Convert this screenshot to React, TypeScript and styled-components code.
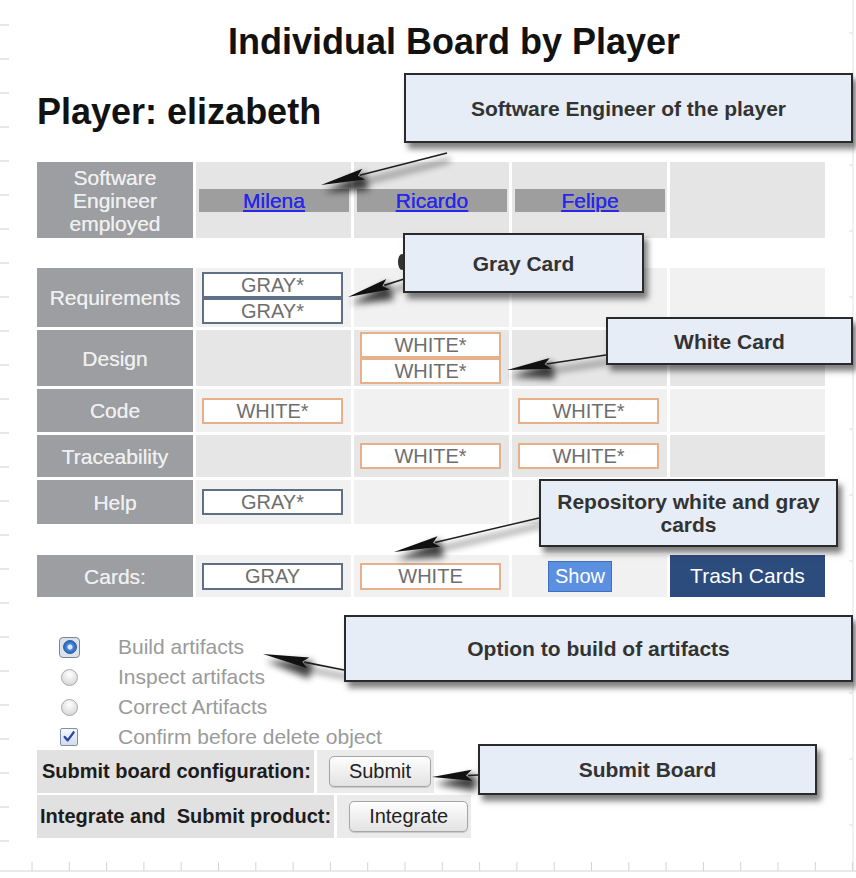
import React from 'react';
import styled, { createGlobalStyle, css } from 'styled-components';

const GlobalStyle = createGlobalStyle`
  html, body { margin: 0; padding: 0; background: #fff; }
  body { font-family: "Liberation Sans", Arial, sans-serif; }
`;

const Page = styled.div`
  position: relative;
  width: 856px;
  height: 878px;
  overflow: hidden;
  background: #fff;
  font-family: "Liberation Sans", Arial, sans-serif;
`;

const Ruler = styled.svg`
  position: absolute;
  left: 0;
  top: 0;
  width: 856px;
  height: 878px;
  z-index: 0;
`;

const Content = styled.div`
  position: relative;
  z-index: 1;
  padding: 22px 0 0 37px;
  display: flex;
  flex-direction: column;
  align-items: flex-start;
`;

const Title = styled.h1`
  align-self: stretch;
  margin: 0;
  padding-left: 15px;
  text-align: center;
  font-size: 36px;
  line-height: 40px;
  font-weight: bold;
  color: #121212;
`;

const PlayerName = styled.h2`
  margin: 30px 0 0;
  font-size: 36px;
  line-height: 40px;
  font-weight: bold;
  color: #121212;
`;

const Board = styled.div<{ $rows: string; $mt: number }>`
  display: grid;
  grid-template-columns: 156px repeat(4, 155px);
  grid-template-rows: ${p => p.$rows};
  gap: 3px;
  margin-top: ${p => p.$mt}px;
`;

const HeadCell = styled.div`
  background: #9c9ea2;
  color: #efefef;
  font-size: 21px;
  line-height: 23px;
  display: flex;
  align-items: center;
  justify-content: center;
  text-align: center;
  text-shadow: 0 0 0.4px #efefef;
`;

const EngineerCell = styled.div`
  background: #e5e5e5;
  display: flex;
  flex-direction: column;
  justify-content: center;
  padding: 0 2px 0 3px;
`;

const LinkBar = styled.div`
  background: #9e9e9e;
  height: 23px;
  line-height: 23px;
  text-align: center;
`;

const EngineerLink = styled.a`
  color: #2626ee;
  text-decoration: underline;
  font-size: 21px;
  text-shadow: 0 0 0.5px #2626ee;
`;

const DataCell = styled.div<{ $tone: 'light' | 'mid'; $padLeft?: number }>`
  background: ${p => (p.$tone === 'light' ? '#f1f1f1' : '#e6e6e6')};
  display: flex;
  flex-direction: column;
  justify-content: center;
  align-items: flex-start;
  padding-left: ${p => p.$padLeft ?? 6}px;
`;

const Card = styled.div<{ $kind: 'gray' | 'white'; $h?: number }>`
  box-sizing: border-box;
  width: 141px;
  height: ${p => p.$h ?? 26}px;
  background: #fff;
  border: 2px solid ${p => (p.$kind === 'gray' ? '#5f6f85' : '#e5b08a')};
  color: #6e6e6e;
  font-size: 20px;
  line-height: ${p => (p.$h ?? 26) - 4}px;
  text-align: center;
`;

const ShowButton = styled.button`
  height: 31px;
  padding: 0 6px;
  background: #5b8fdf;
  border: 1px solid #3f6fbf;
  color: #fff;
  font-family: "Liberation Sans", Arial, sans-serif;
  font-size: 20px;
  line-height: 29px;
  cursor: pointer;
`;

const TrashButton = styled.button`
  width: 100%;
  height: 100%;
  background: #2c4c7e;
  border: none;
  color: #fff;
  font-family: "Liberation Sans", Arial, sans-serif;
  font-size: 21px;
  cursor: pointer;
`;

const Options = styled.div`
  margin-top: 35px;
  display: flex;
  flex-direction: column;
`;

const OptionRow = styled.label`
  display: flex;
  align-items: center;
  height: 30px;
  color: #9a9a9a;
  font-size: 21px;
`;

const Mark = styled.span`
  box-sizing: border-box;
  width: 81px;
  padding-left: 22px;
  display: flex;
  align-items: center;
`;

const RadioBox = styled.span<{ $on?: boolean }>`
  box-sizing: border-box;
  width: 21px;
  height: 21px;
  flex-shrink: 0;
  display: flex;
  align-items: center;
  justify-content: center;
  border-radius: 4px;
  ${p =>
    p.$on &&
    css`
      border: 1px solid #7d8697;
      background: #dde2ea;
    `}
`;

const Radio = styled.input.attrs({ type: 'radio' })`
  appearance: none;
  flex-shrink: 0;
  margin: 0;
  width: 17px;
  height: 17px;
  border-radius: 50%;
  border: 1px solid #a9a9a9;
  background: radial-gradient(circle at 50% 30%, #ffffff, #cfcfcf);
  &:checked {
    width: 14px;
    height: 14px;
    border-color: #2b5c9e;
    background: radial-gradient(circle at 50% 50%, #dbe9ff 0 2px, #4a8be0 3px, #1e5bb0 7px);
  }
`;

const CheckBox = styled.span`
  box-sizing: border-box;
  flex-shrink: 0;
  width: 18px;
  height: 18px;
  margin-left: 1px;
  border: 1px solid #7f8fae;
  border-radius: 2px;
  background: linear-gradient(#f6f8fc, #d3dcea);
  display: flex;
  align-items: center;
  justify-content: center;
`;

const ActionRow = styled.div<{ $mt: number }>`
  display: flex;
  gap: 3px;
  height: 43px;
  margin-top: ${p => p.$mt}px;
`;

const ActionLabel = styled.div<{ $pl: number }>`
  background: #e1e1e1;
  color: #1c1c1c;
  font-size: 20px;
  font-weight: bold;
  padding: 0 3px 0 ${p => p.$pl}px;
  display: flex;
  align-items: center;
  white-space: nowrap;
`;

const ActionCell = styled.div`
  background: #ebebeb;
  padding: 0 3px 0 12px;
  display: flex;
  align-items: center;
`;

const PushButton = styled.button`
  height: 31px;
  padding: 0 19px;
  border: 1px solid #a5a5a5;
  border-radius: 5px;
  background: linear-gradient(#fefefe, #e2e2e2);
  box-shadow: 0 1px 1px rgba(0, 0, 0, 0.15);
  font-family: "Liberation Sans", Arial, sans-serif;
  font-size: 20px;
  color: #222;
  cursor: pointer;
`;

const Overlay = styled.svg`
  position: absolute;
  left: 0;
  top: 0;
  width: 856px;
  height: 878px;
  pointer-events: none;
  z-index: 2;
`;

const Callout = styled.div<{ $x: number; $y: number; $w: number; $h: number }>`
  position: absolute;
  left: ${p => p.$x}px;
  top: ${p => p.$y}px;
  width: ${p => p.$w}px;
  height: ${p => p.$h}px;
  box-sizing: border-box;
  z-index: 3;
  padding: 0 10px;
  border: 2px solid #2a2a2a;
  background: #e7edf6;
  box-shadow: 4px 6px 6px rgba(0, 0, 0, 0.5);
  display: flex;
  align-items: center;
  justify-content: center;
  text-align: center;
  color: #333;
  font-size: 21px;
  line-height: 23px;
  font-weight: bold;
`;

type Kind = 'gray' | 'white';
type Row = { label: string; tone: 'light' | 'mid'; cells: Kind[][] };

const rows: Row[] = [
  { label: 'Requirements', tone: 'light', cells: [['gray', 'gray'], [], [], []] },
  { label: 'Design', tone: 'mid', cells: [[], ['white', 'white'], [], []] },
  { label: 'Code', tone: 'light', cells: [['white'], [], ['white'], []] },
  { label: 'Traceability', tone: 'mid', cells: [[], ['white'], ['white'], []] },
  { label: 'Help', tone: 'light', cells: [['gray'], [], [], []] },
];

const engineers = ['Milena', 'Ricardo', 'Felipe'];

type ArrowDef = { tail: [number, number]; tip: [number, number]; head: number };
const arrows: ArrowDef[] = [
  { tail: [447, 153], tip: [321, 185], head: 44 },
  { tail: [404, 279], tip: [348, 297], head: 42 },
  { tail: [606, 355], tip: [507, 370], head: 44 },
  { tail: [539, 518], tip: [394, 552], head: 46 },
  { tail: [344, 670], tip: [263, 654], head: 46 },
  { tail: [478, 775], tip: [432, 777], head: 40 },
];

function Arrow({ tail, tip, head }: ArrowDef) {
  const dx = tip[0] - tail[0];
  const dy = tip[1] - tail[1];
  const len = Math.hypot(dx, dy);
  const ux = dx / len;
  const uy = dy / len;
  const nx = -uy;
  const ny = ux;
  const bx = tip[0] - ux * head;
  const by = tip[1] - uy * head;
  const w = 5.5;
  const pts = `${tip[0]},${tip[1]} ${bx + nx * w},${by + ny * w} ${bx + ux * 6},${by + uy * 6} ${bx - nx * w},${by - ny * w}`;
  const shadowPts = `${tip[0]},${tip[1]} ${bx + nx * 9},${by + ny * 9} ${bx - nx * 9},${by - ny * 9}`;
  return (
    <g>
      <g filter="url(#arrowShadow)" transform="translate(3 7)" opacity="0.75">
        <line x1={tail[0]} y1={tail[1]} x2={bx} y2={by} stroke="#000" strokeWidth="2.5" />
        <polygon points={shadowPts} fill="#000" />
      </g>
      <line x1={tail[0]} y1={tail[1]} x2={bx + ux * 4} y2={by + uy * 4} stroke="#1e1e1e" strokeWidth="1.6" />
      <polygon points={pts} fill="#111" />
    </g>
  );
}

function RulerMarks() {
  const left = Array.from({ length: 25 }, (_, k) => 25 + 34 * k);
  const bottom = Array.from({ length: 23 }, (_, k) => 32 + 37.3 * k);
  const right = Array.from({ length: 13 }, (_, k) => 33 + 66 * k);
  return (
    <Ruler viewBox="0 0 856 878">
      {left.map(y => (
        <line key={`l${y}`} x1="0" y1={y} x2="9" y2={y} stroke="#cfcfcf" strokeWidth="1" />
      ))}
      <line x1="853" y1="0" x2="853" y2="871" stroke="#e2e2e2" strokeWidth="1" />
      {right.map(y => (
        <line key={`r${y}`} x1="849" y1={y} x2="853" y2={y} stroke="#dcdcdc" strokeWidth="1" />
      ))}
      <line x1="0" y1="871" x2="856" y2="871" stroke="#d4d4d4" strokeWidth="1" />
      {bottom.map(x => (
        <line key={`b${x}`} x1={x} y1="862" x2={x} y2="871" stroke="#d4d4d4" strokeWidth="1" />
      ))}
    </Ruler>
  );
}

export default function App() {
  return (
    <Page>
      <GlobalStyle />
      <RulerMarks />
      <Content>
        <Title>Individual Board by Player</Title>
        <PlayerName>Player: elizabeth</PlayerName>

        <Board $rows="76px" $mt={30}>
          <HeadCell>Software Engineer employed</HeadCell>
          {engineers.map(name => (
            <EngineerCell key={name}>
              <LinkBar>
                <EngineerLink href="#">{name}</EngineerLink>
              </LinkBar>
            </EngineerCell>
          ))}
          <EngineerCell />
        </Board>

        <Board $rows="59px 56px 43px 42px 44px" $mt={30}>
          {rows.map(row => (
            <React.Fragment key={row.label}>
              <HeadCell>{row.label}</HeadCell>
              {row.cells.map((cards, i) => (
                <DataCell key={i} $tone={row.tone}>
                  {cards.map((kind, j) => (
                    <Card key={j} $kind={kind}>
                      {kind === 'gray' ? 'GRAY*' : 'WHITE*'}
                    </Card>
                  ))}
                </DataCell>
              ))}
            </React.Fragment>
          ))}
        </Board>

        <Board $rows="42px" $mt={31}>
          <HeadCell>Cards:</HeadCell>
          <DataCell $tone="light">
            <Card $kind="gray" $h={27}>GRAY</Card>
          </DataCell>
          <DataCell $tone="light">
            <Card $kind="white" $h={27}>WHITE</Card>
          </DataCell>
          <DataCell $tone="light" $padLeft={36}>
            <ShowButton>Show</ShowButton>
          </DataCell>
          <DataCell $tone="light" $padLeft={0}>
            <TrashButton>Trash Cards</TrashButton>
          </DataCell>
        </Board>

        <Options>
          <OptionRow>
            <Mark>
              <RadioBox $on>
                <Radio name="mode" defaultChecked />
              </RadioBox>
            </Mark>
            Build artifacts
          </OptionRow>
          <OptionRow>
            <Mark>
              <RadioBox>
                <Radio name="mode" />
              </RadioBox>
            </Mark>
            Inspect artifacts
          </OptionRow>
          <OptionRow>
            <Mark>
              <RadioBox>
                <Radio name="mode" />
              </RadioBox>
            </Mark>
            Correct Artifacts
          </OptionRow>
          <OptionRow>
            <Mark>
              <CheckBox>
                <svg width="14" height="14" viewBox="0 0 13 13">
                  <path d="M2.5 6.5 L5.3 9.6 L10.8 2.2" fill="none" stroke="#2747a8" strokeWidth="2.2" strokeLinecap="round" strokeLinejoin="round" />
                </svg>
              </CheckBox>
            </Mark>
            Confirm before delete object
          </OptionRow>
        </Options>

        <ActionRow $mt={-2}>
          <ActionLabel $pl={5}>Submit board configuration:</ActionLabel>
          <ActionCell>
            <PushButton>Submit</PushButton>
          </ActionCell>
        </ActionRow>
        <ActionRow $mt={2}>
          <ActionLabel $pl={3}>Integrate and&nbsp; Submit product:</ActionLabel>
          <ActionCell>
            <PushButton>Integrate</PushButton>
          </ActionCell>
        </ActionRow>
      </Content>

      <Overlay viewBox="0 0 856 878">
        <defs>
          <filter id="arrowShadow" x="-30%" y="-80%" width="160%" height="260%">
            <feGaussianBlur stdDeviation="3.5" />
          </filter>
        </defs>
        <ellipse cx="402" cy="262" rx="4" ry="8" fill="#333" />
        {arrows.map((a, i) => (
          <Arrow key={i} {...a} />
        ))}
      </Overlay>

      <Callout $x={404} $y={73} $w={449} $h={70}>Software Engineer of the player</Callout>
      <Callout $x={403} $y={233} $w={241} $h={60}>Gray Card</Callout>
      <Callout $x={606} $y={317} $w={247} $h={48}>White Card</Callout>
      <Callout $x={539} $y={479} $w={299} $h={68}>Repository white and gray cards</Callout>
      <Callout $x={344} $y={615} $w={509} $h={67}>Option to build of artifacts</Callout>
      <Callout $x={478} $y={744} $w={339} $h={51}>Submit Board</Callout>
    </Page>
  );
}
